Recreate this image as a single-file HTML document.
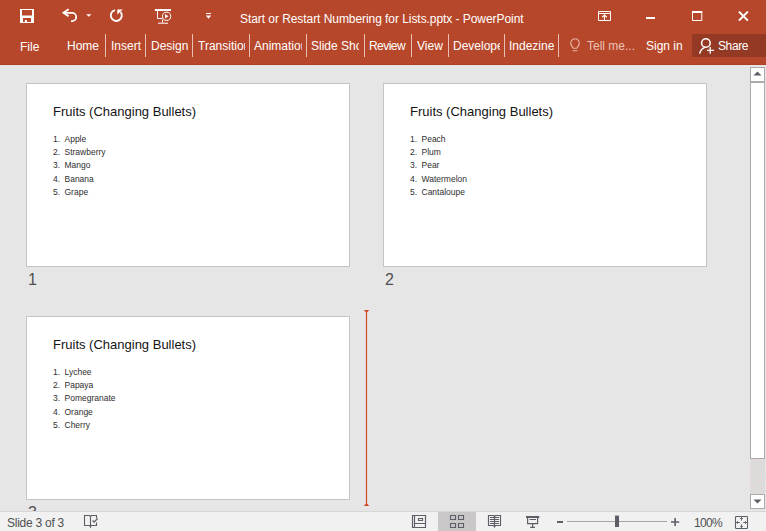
<!DOCTYPE html>
<html><head><meta charset="utf-8">
<style>
*{margin:0;padding:0;box-sizing:border-box}
html,body{width:766px;height:531px;overflow:hidden;background:#E6E6E6;font-family:"Liberation Sans",sans-serif}
.abs{position:absolute}
#hdr{position:absolute;left:0;top:0;width:766px;height:65px;background:#B7472A}
#hdr .ln{position:absolute;left:0;top:64px;width:766px;height:1px;background:#AE4024}
.t{position:absolute;color:#fff;white-space:nowrap;font-size:12px;line-height:14px}
.sep{position:absolute;top:34px;width:1px;height:23px;background:#E7C0B5}
.tab{position:absolute;top:39px;height:14px;overflow:hidden;color:#fff;font-size:12px;line-height:14px;white-space:nowrap}
#share{position:absolute;left:692px;top:34px;width:74px;height:23px;background:#943A24}
.slide{position:absolute;width:324px;height:184px;background:#fff;border:1px solid #C4C4C4}
.slide .ttl{position:absolute;left:26px;top:21px;font-size:13px;line-height:14px;color:#141414;white-space:nowrap}
.slide .it{position:absolute;left:26px;font-size:8.5px;line-height:10px;color:#2E2E2E;white-space:nowrap}
.slide .it b{font-weight:normal;display:inline-block;width:11.5px}
.num{position:absolute;font-size:16px;line-height:17px;color:#505050}
#status{position:absolute;left:0;top:511px;width:766px;height:20px;background:#F1F1F1;border-top:1px solid #D6D6D6}
.st{position:absolute;font-size:12px;letter-spacing:-0.25px;line-height:12px;color:#505050;white-space:nowrap}
</style></head><body>
<div id="hdr"><div class="ln"></div>
  <!-- save -->
  <svg class="abs" style="left:20px;top:9px" width="14" height="14" viewBox="0 0 14 14">
    <path d="M0 0H14V14H0Z M2 1V6.5H12V1Z M3 9V13H4.9V11H7V13H11V9Z" fill="#fff" fill-rule="evenodd"/>
  </svg>
  <!-- undo -->
  <svg class="abs" style="left:60px;top:7px" width="20" height="17" viewBox="0 0 20 17">
    <path d="M3.2 5.8H12A4.2 4.2 0 0 1 12 14.2H11" stroke="#fff" stroke-width="1.8" fill="none"/>
    <path d="M8.6 2.3L3.6 5.8L8.6 9.3" stroke="#fff" stroke-width="2" fill="none" stroke-linejoin="miter"/>
  </svg>
  <svg class="abs" style="left:86px;top:14px" width="6" height="3" viewBox="0 0 6 3"><path d="M0.2 0.2H5.4L2.8 2.8Z" fill="#fff"/></svg>
  <!-- repeat -->
  <svg class="abs" style="left:108px;top:8px" width="17" height="16" viewBox="0 0 17 16">
    <path d="M7 2.1A5.5 5.5 0 1 0 12.6 4.0" stroke="#fff" stroke-width="1.9" fill="none"/>
    <path d="M9.3 1.4H14.8L9.3 6.6Z" fill="#fff"/>
  </svg>
  <!-- slideshow from start -->
  <svg class="abs" style="left:154px;top:8px" width="19" height="17" viewBox="0 0 19 17">
    <rect x="0.8" y="1" width="16.2" height="2" fill="#fff"/>
    <path d="M3.5 3V10.5H8" stroke="#fff" stroke-width="1" fill="none"/>
    <circle cx="12.6" cy="8.3" r="4.1" stroke="#fff" stroke-width="1" fill="none"/>
    <path d="M11 6V10.6L14.5 8.3Z" fill="#fff"/>
    <path d="M8.5 11.5V14.5M4 15.2H14" stroke="#fff" stroke-width="1" fill="none"/>
  </svg>
  <!-- customize -->
  <svg class="abs" style="left:205px;top:12px" width="7" height="8" viewBox="0 0 7 8">
    <rect x="1" y="1" width="5" height="1" fill="#fff"/><path d="M0.8 3.6H6.2L3.5 6.8Z" fill="#fff"/>
  </svg>
  <div class="t" style="left:240px;top:12px;letter-spacing:-0.06px">Start or Restart Numbering for Lists.pptx - PowerPoint</div>
  <!-- window buttons -->
  <svg class="abs" style="left:598px;top:11px" width="13" height="10" viewBox="0 0 13 10">
    <path d="M0.5 0.5H12.5V9.5H0.5Z M0.5 2.5H12.5 M6.5 3.5V9.5" stroke="#fff" stroke-width="1" fill="none"/>
    <path d="M4.2 6.2L6.5 4L8.8 6.2" stroke="#fff" stroke-width="1.2" fill="none"/>
  </svg>
  <div class="abs" style="left:646px;top:17px;width:9px;height:2px;background:#fff"></div>
  <svg class="abs" style="left:692px;top:11px" width="11" height="10" viewBox="0 0 11 10">
    <path d="M0.5 1.5H9.8V9.5H0.5Z" stroke="#fff" stroke-width="1" fill="none"/><rect x="0" y="0" width="10.3" height="2" fill="#fff"/>
  </svg>
  <svg class="abs" style="left:738px;top:11px" width="11" height="10" viewBox="0 0 11 10">
    <path d="M0.9 0.6L9.9 9.6M9.9 0.6L0.9 9.6" stroke="#fff" stroke-width="2" fill="none"/>
  </svg>
  <!-- tabs -->
  <div class="t" style="left:20px;top:40px">File</div>
  <div class="tab" style="left:67px;width:38px">Home</div>
  <div class="sep" style="left:105px"></div>
  <div class="tab" style="left:111px;width:34px">Insert</div>
  <div class="sep" style="left:145px"></div>
  <div class="tab" style="left:151px;width:41px">Design</div>
  <div class="sep" style="left:192px"></div>
  <div class="tab" style="left:198px;width:47px">Transitions</div>
  <div class="sep" style="left:249px"></div>
  <div class="tab" style="left:254px;width:48px">Animations</div>
  <div class="sep" style="left:306px"></div>
  <div class="tab" style="left:311px;width:48px">Slide Show</div>
  <div class="sep" style="left:364px"></div>
  <div class="tab" style="left:369px;width:40px;letter-spacing:-0.55px">Review</div>
  <div class="sep" style="left:411px"></div>
  <div class="tab" style="left:417px;width:28px">View</div>
  <div class="sep" style="left:448px"></div>
  <div class="tab" style="left:453px;width:47px">Developer</div>
  <div class="sep" style="left:504px"></div>
  <div class="tab" style="left:509px;width:46px">Indezine</div>
  <div class="sep" style="left:558px"></div>
  <!-- bulb -->
  <svg class="abs" style="left:569px;top:38px" width="12" height="15" viewBox="0 0 12 15">
    <path d="M4.2 10.2L2.1 6.9A4.3 4.3 0 1 1 9.9 6.9L7.8 10.2Z M3.6 12.8H8.4" stroke="#E8B5A6" stroke-width="1.1" fill="none"/>
  </svg>
  <div class="t" style="left:587px;top:39px;color:#EBC2B6">Tell me...</div>
  <div class="t" style="left:646px;top:39px">Sign in</div>
  <div id="share">
    <svg class="abs" style="left:6px;top:4px" width="17" height="17" viewBox="0 0 17 17">
      <circle cx="7.9" cy="5.0" r="4.3" stroke="#fff" stroke-width="1.5" fill="none"/>
      <path d="M1.6 15.6C2.4 12.5 4.2 10.4 6.8 9.4" stroke="#fff" stroke-width="1.5" fill="none"/>
      <path d="M12.2 9V15.8M9 12.4H16" stroke="#fff" stroke-width="1.3" fill="none"/>
    </svg>
    <div class="t" style="left:26px;top:5px;letter-spacing:-0.4px">Share</div>
  </div>
</div>

<!-- slides -->
<div class="slide" style="left:26px;top:83px">
  <div class="ttl">Fruits (Changing Bullets)</div>
  <div class="it" style="top:50px"><b>1.</b>Apple</div>
  <div class="it" style="top:63px"><b>2.</b>Strawberry</div>
  <div class="it" style="top:76px"><b>3.</b>Mango</div>
  <div class="it" style="top:90px"><b>4.</b>Banana</div>
  <div class="it" style="top:103px"><b>5.</b>Grape</div>
</div>
<div class="num" style="left:28px;top:271px">1</div>
<div class="slide" style="left:383px;top:83px">
  <div class="ttl">Fruits (Changing Bullets)</div>
  <div class="it" style="top:50px"><b>1.</b>Peach</div>
  <div class="it" style="top:63px"><b>2.</b>Plum</div>
  <div class="it" style="top:76px"><b>3.</b>Pear</div>
  <div class="it" style="top:90px"><b>4.</b>Watermelon</div>
  <div class="it" style="top:103px"><b>5.</b>Cantaloupe</div>
</div>
<div class="num" style="left:385px;top:271px">2</div>
<div class="slide" style="left:26px;top:316px">
  <div class="ttl">Fruits (Changing Bullets)</div>
  <div class="it" style="top:50px"><b>1.</b>Lychee</div>
  <div class="it" style="top:63px"><b>2.</b>Papaya</div>
  <div class="it" style="top:76px"><b>3.</b>Pomegranate</div>
  <div class="it" style="top:90px"><b>4.</b>Orange</div>
  <div class="it" style="top:103px"><b>5.</b>Cherry</div>
</div>
<div class="num" style="left:28px;top:504px">3</div>

<!-- insertion line -->
<svg class="abs" style="left:363px;top:309px" width="7" height="198" viewBox="0 0 7 198">
  <path d="M3.5 1V196" stroke="#D24726" stroke-width="1.2"/>
  <path d="M0.8 1H6.2L3.5 4Z M0.8 197H6.2L3.5 194Z" fill="#D24726"/>
</svg>

<!-- scrollbar -->
<div class="abs" style="left:749px;top:65px;width:17px;height:446px;background:#E6E6E6"></div>
<div class="abs" style="left:750px;top:67px;width:15px;height:15px;background:#fff;border:1px solid #ABABAB"></div>
<svg class="abs" style="left:753px;top:71px" width="9" height="5" viewBox="0 0 9 5"><path d="M0.5 4.5H8.5L4.5 0.5Z" fill="#5F5F67"/></svg>
<div class="abs" style="left:750px;top:82px;width:15px;height:377px;background:#fff;border:1px solid #ABABAB"></div>
<svg class="abs" style="left:750px;top:459px" width="15" height="35" viewBox="0 0 15 35"><rect width="15" height="35" fill="#E0DAD8"/><g fill="#B5DDF0">
<rect x="3" y="3" width="1" height="1"/><rect x="6" y="3" width="1" height="1"/><rect x="9" y="3" width="1" height="1"/><rect x="12" y="3" width="1" height="1"/>
<rect x="5" y="6" width="1" height="1"/><rect x="8" y="7" width="1" height="1"/><rect x="11" y="6" width="1" height="1"/><rect x="13" y="7" width="1" height="1"/>
<rect x="2" y="10" width="1" height="1"/><rect x="5" y="11" width="1" height="1"/><rect x="10" y="11" width="1" height="1"/><rect x="12" y="11" width="1" height="1"/>
<rect x="2" y="15" width="1" height="1"/><rect x="7" y="15" width="1" height="1"/><rect x="12" y="15" width="1" height="1"/>
<rect x="5" y="19" width="1" height="1"/><rect x="9" y="19" width="1" height="1"/><rect x="12" y="19" width="1" height="1"/>
<rect x="2" y="22" width="1" height="1"/><rect x="6" y="23" width="1" height="1"/><rect x="10" y="24" width="1" height="1"/><rect x="12" y="23" width="1" height="1"/>
<rect x="4" y="27" width="1" height="1"/><rect x="8" y="28" width="1" height="1"/><rect x="11" y="29" width="1" height="1"/><rect x="13" y="26" width="1" height="1"/>
<rect x="4" y="31" width="1" height="1"/><rect x="9" y="31" width="1" height="1"/><rect x="13" y="32" width="1" height="1"/>
</g></svg>
<div class="abs" style="left:750px;top:494px;width:15px;height:15px;background:#fff;border:1px solid #ABABAB"></div>
<svg class="abs" style="left:753px;top:499px" width="9" height="5" viewBox="0 0 9 5"><path d="M0.5 0.5H8.5L4.5 4.5Z" fill="#5F5F67"/></svg>

<!-- status bar -->
<div id="status">
  <div class="st" style="left:7px;top:5px">Slide 3 of 3</div>
</div>
<svg class="abs" style="left:80px;top:512px" width="686" height="19" viewBox="80 512 686 19">
  <g stroke="#5E5E68" stroke-width="1.2" fill="none">
    <!-- spell book -->
    <path d="M90.5 527.8V516.5L89.5 515.5H84.5V525.5H89.5L90.5 526.5L91.5 525.5H96.5V522.6 M96.5 518.3V515.5H91.5L90.5 516.5" stroke-width="1.1"/>
    <path d="M92.6 520.5L94.1 522.1L97.6 518.5" stroke-width="1.3"/>
    <!-- normal view -->
    <path d="M412.5 515.5H425.5V527.5H412.5Z M414.5 515.5V527.5 M414.5 523.5H425.5 M418.5 518.5H422.5V520.5H418.5Z" stroke-width="1.15"/>
  </g>
  <!-- sorter selected -->
  <defs><pattern id="dp" x="438" y="512" width="4" height="4" patternUnits="userSpaceOnUse"><rect width="4" height="4" fill="#C8C6C6"/><rect x="1" y="1" width="1" height="1" fill="#D6CECE"/><rect x="3" y="3" width="1" height="1" fill="#D6CECE"/></pattern></defs><rect x="438" y="512" width="38" height="19" fill="url(#dp)"/>
  <g stroke="#5E5E68" stroke-width="1.2" fill="none">
    <path d="M450.5 515.5H455.5V519.5H450.5Z M458.5 515.5H463.5V519.5H458.5Z M450.5 523.5H455.5V527.5H450.5Z M458.5 523.5H463.5V527.5H458.5Z" stroke-width="1.15"/>
    <!-- reading -->
    <path d="M488.5 515.5H493.5L494.5 516.5L495.5 515.5H500.5V525.5H495.5L494.5 527L493.5 525.5H488.5Z M494.5 516.5V527.5" stroke-width="1.15"/>
    <path d="M490 517.5H499 M490 519.5H499 M490 521.5H499 M490 523.5H499" stroke-width="1"/>
    <!-- slideshow -->
    <path d="M527.6 517.5V523.6H537.6V517.5 M529.5 519.5H536 M532.6 523.6V527.3 M530.2 527.4H535"/>
  </g>
  <rect x="526" y="516" width="13.2" height="2" fill="#5E5E68"/>
  <!-- zoom -->
  <rect x="557" y="521" width="6" height="2" fill="#5E5E68"/>
  <rect x="567" y="521" width="100" height="1" fill="#A4A4A6"/>
  <rect x="615" y="515.6" width="4" height="11.4" fill="#5E5E68"/>
  <path d="M671 522H679.2 M675.1 518V526" stroke="#5E5E68" stroke-width="1.6"/>
  <!-- fit -->
  <g stroke="#5E5E68" fill="none">
    <rect x="735.5" y="516.5" width="12" height="12" rx="0.8" stroke-width="1.05"/>
    <path d="M741.5 516.5V520.6 M741.5 524.3V528.3 M735.8 522.5H739.8 M743.3 522.5H747.3" stroke-width="0.95"/>
    <path d="M740.2 518.5H742.8 M740.2 526.5H742.8 M737.5 521.2V523.8 M745.5 521.2V523.8" stroke-width="0.95"/>
  </g>
</svg>
<div class="st" style="left:694px;top:517px;letter-spacing:-0.7px">100%</div>
</body></html>
